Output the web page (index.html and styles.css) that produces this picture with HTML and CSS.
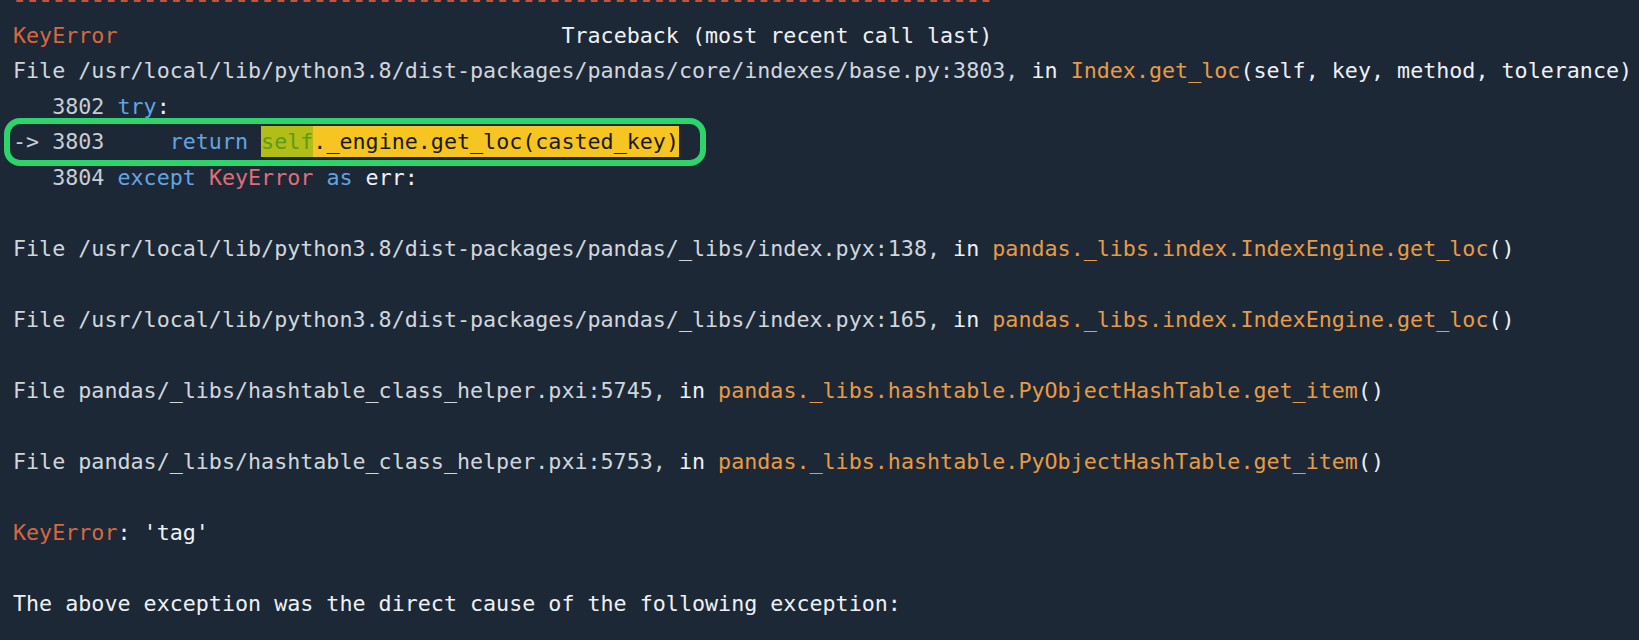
FILE: index.html
```html
<!DOCTYPE html>
<html lang="en">
<head>
<meta charset="utf-8">
<title>KeyError traceback</title>
<link rel="stylesheet" href="styles.css">
</head>
<body>
<div class="term">
<div class="line rule">---------------------------------------------------------------------------</div>
<div class="line"><span class="err">KeyError</span>                                  <span class="hi">Traceback (most recent call last)</span></div>
<div class="line"><span class="path">File /usr/local/lib/python3.8/dist-packages/pandas/core/indexes/base.py:3803,</span> <span class="hi">in</span> <span class="fn">Index.get_loc</span><span class="hi">(self, key, method, tolerance)</span></div>
<div class="line">   <span class="num">3802</span> <span class="kw">try</span><span class="hi">:</span></div>
<div class="line"><span class="callout"><span class="num">-&gt; 3803</span>     <span class="kw">return</span> <span class="mark"><span class="mark-self">self</span>._engine.get_loc(casted_key)</span></span></div>
<div class="line">   <span class="num">3804</span> <span class="kw">except</span> <span class="exc">KeyError</span> <span class="kw">as</span> <span class="hi">err:</span></div>
<div class="line"> </div>
<div class="line"><span class="path">File /usr/local/lib/python3.8/dist-packages/pandas/_libs/index.pyx:138,</span> <span class="hi">in</span> <span class="fn">pandas._libs.index.IndexEngine.get_loc</span><span class="hi">()</span></div>
<div class="line"> </div>
<div class="line"><span class="path">File /usr/local/lib/python3.8/dist-packages/pandas/_libs/index.pyx:165,</span> <span class="hi">in</span> <span class="fn">pandas._libs.index.IndexEngine.get_loc</span><span class="hi">()</span></div>
<div class="line"> </div>
<div class="line"><span class="path">File pandas/_libs/hashtable_class_helper.pxi:5745,</span> <span class="hi">in</span> <span class="fn">pandas._libs.hashtable.PyObjectHashTable.get_item</span><span class="hi">()</span></div>
<div class="line"> </div>
<div class="line"><span class="path">File pandas/_libs/hashtable_class_helper.pxi:5753,</span> <span class="hi">in</span> <span class="fn">pandas._libs.hashtable.PyObjectHashTable.get_item</span><span class="hi">()</span></div>
<div class="line"> </div>
<div class="line"><span class="err">KeyError</span><span class="hi">: 'tag'</span></div>
<div class="line"> </div>
<div class="line"><span class="hi">The above exception was the direct cause of the following exception:</span></div>
</div>
</body>
</html>
```

FILE: styles.css
```css
html, body {
  margin: 0;
  padding: 0;
  background: #1d2837;
  height: 100%;
  overflow: hidden;
}

.term {
  margin-top: -18px;
  padding-left: 13px;
  font-family: "DejaVu Sans Mono", "Liberation Mono", monospace;
  font-size: 21.7px;
  line-height: 35.5px;
  color: #d4dae1;
}

.line {
  height: 35.5px;
  white-space: pre;
}

.rule {
  color: #c4553a;
  font-weight: bold;
}

.err {
  color: #d8673f;
}

.hi {
  color: #eef1f5;
}

.path {
  color: #d0d6dd;
}

.fn {
  color: #e69b46;
}

.num {
  color: #c7ced6;
}

.kw {
  color: #62a4e0;
}

.exc {
  color: #df6f77;
}

.callout {
  display: inline-block;
  margin-left: -3px;
  padding: 0 21px 0 3px;
  border-radius: 10px;
  box-shadow: 0 0 0 6px #2cd46b;
}

.mark {
  background: #f6c521;
  color: #1a1a14;
  padding: 3px 0;
}

.mark-self {
  background: #b3bd18;
  color: #5f9a16;
  padding: 3px 0;
}
```
